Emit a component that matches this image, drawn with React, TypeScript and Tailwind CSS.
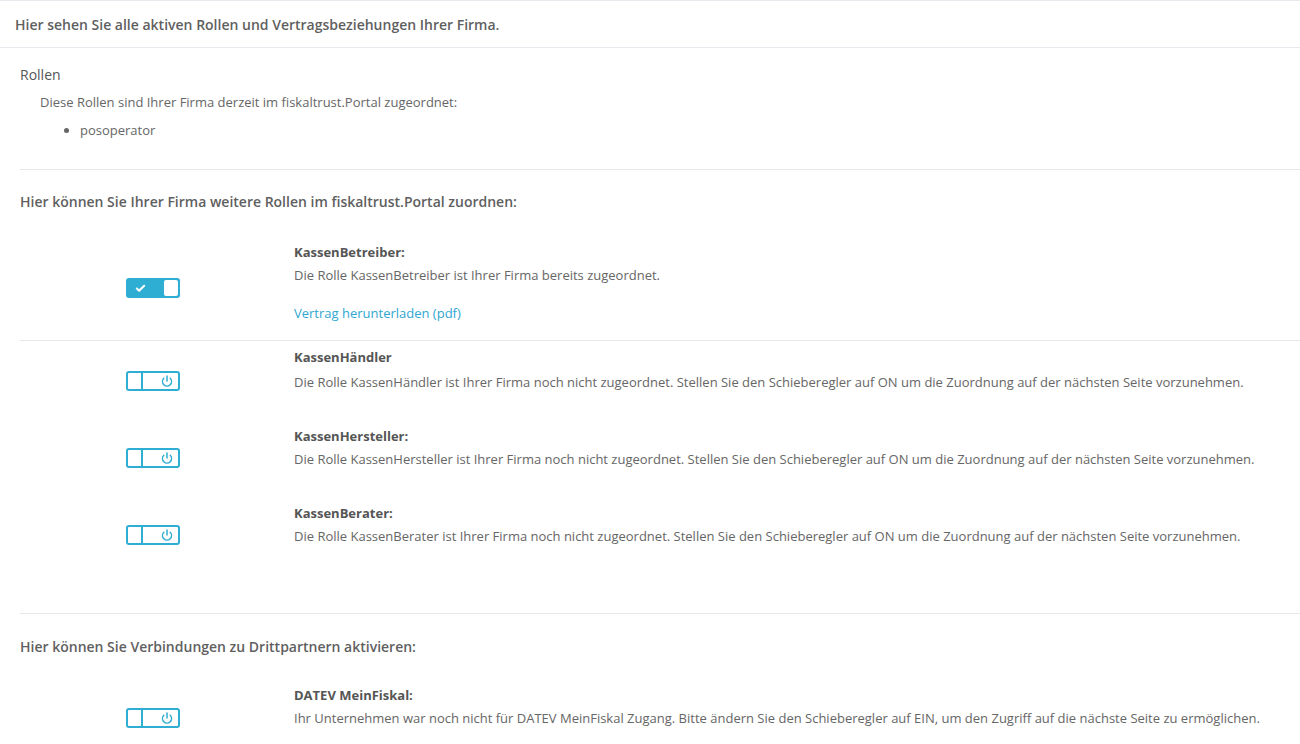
import { Check, Power } from "lucide-react";

function ToggleOn() {
  return (
    <div className="w-[54px] h-[20px] rounded-[3px] bg-[#2eaed3] flex items-center justify-between pl-[9px] pr-[2px]">
      <Check size={11} strokeWidth={4.5} className="text-white" />
      <div className="w-[14px] h-[16px] bg-white rounded-[2px]" />
    </div>
  );
}

function ToggleOff() {
  return (
    <div className="w-[54px] h-[20px] rounded-[3px] border-2 border-[#2eaed3] flex items-stretch bg-white">
      <div className="w-[15px] border-r-2 border-[#2eaed3]" />
      <div className="flex-1 flex items-center justify-center pl-[12px]">
        <Power size={12} strokeWidth={3} className="text-[#2eaed3]" />
      </div>
    </div>
  );
}

function Row({ on, title, text, link, rowMt, toggleMt, descMt }: { on?: boolean; title: string; text: string; link?: string; rowMt: string; toggleMt: string; descMt: string }) {
  return (
    <div className={"grid grid-cols-[274px_1fr] " + rowMt}>
      <div className={toggleMt + " ml-[106px]"}>{on ? <ToggleOn /> : <ToggleOff />}</div>
      <div>
        <div className="leading-[20px] font-bold text-[#555]">{title}</div>
        <div className={"leading-[20px] " + descMt}>{text}</div>
        {link && <div className="leading-[20px] mt-[18px] text-[#2fa6d1]">{link}</div>}
      </div>
    </div>
  );
}

export default function App() {
  return (
    <div className="min-h-screen bg-white font-['Open_Sans',sans-serif] text-[13px] text-[#666]">
      <div className="h-[48px] border-y border-[#e6e9ee] px-[15px] flex items-center text-[14px] font-semibold text-[#5f5f5f]">
        Hier sehen Sie alle aktiven Rollen und Vertragsbeziehungen Ihrer Firma.
      </div>
      <div className="pl-[20px]">
        <div className="mt-[17px] leading-[20px] text-[14px] text-[#555]">Rollen</div>
        <div className="mt-[7px] leading-[20px] pl-[20px]">Diese Rollen sind Ihrer Firma derzeit im fiskaltrust.Portal zugeordnet:</div>
        <ul className="mt-[8px] pl-[60px] list-disc leading-[20px]">
          <li>posoperator</li>
        </ul>
        <div className="mt-[29px] border-t border-[#e8e8e8]" />
        <div className="mt-[22px] leading-[20px] text-[14px] font-semibold text-[#5f5f5f]">Hier können Sie Ihrer Firma weitere Rollen im fiskaltrust.Portal zuordnen:</div>

        <Row on rowMt="mt-[30px]" toggleMt="mt-[36px]" descMt="mt-[3px]" title="KassenBetreiber:" text="Die Rolle KassenBetreiber ist Ihrer Firma bereits zugeordnet." link="Vertrag herunterladen (pdf)" />
        <div className="mt-[17px] border-t border-[#e8e8e8]" />
        <Row rowMt="mt-[6px]" toggleMt="mt-[24px]" descMt="mt-[5px]" title="KassenHändler" text="Die Rolle KassenHändler ist Ihrer Firma noch nicht zugeordnet. Stellen Sie den Schieberegler auf ON um die Zuordnung auf der nächsten Seite vorzunehmen." />
        <Row rowMt="mt-[34px]" toggleMt="mt-[22px]" descMt="mt-[3px]" title="KassenHersteller:" text="Die Rolle KassenHersteller ist Ihrer Firma noch nicht zugeordnet. Stellen Sie den Schieberegler auf ON um die Zuordnung auf der nächsten Seite vorzunehmen." />
        <Row rowMt="mt-[34px]" toggleMt="mt-[22px]" descMt="mt-[3px]" title="KassenBerater:" text="Die Rolle KassenBerater ist Ihrer Firma noch nicht zugeordnet. Stellen Sie den Schieberegler auf ON um die Zuordnung auf der nächsten Seite vorzunehmen." />
        <div className="mt-[67px] border-t border-[#e8e8e8]" />
        <div className="mt-[23px] leading-[20px] text-[14px] font-semibold text-[#5f5f5f]">Hier können Sie Verbindungen zu Drittpartnern aktivieren:</div>
        <Row rowMt="mt-[28px]" toggleMt="mt-[23px]" descMt="mt-[3px]" title="DATEV MeinFiskal:" text="Ihr Unternehmen war noch nicht für DATEV MeinFiskal Zugang. Bitte ändern Sie den Schieberegler auf EIN, um den Zugriff auf die nächste Seite zu ermöglichen." />
      </div>
    </div>
  );
}
